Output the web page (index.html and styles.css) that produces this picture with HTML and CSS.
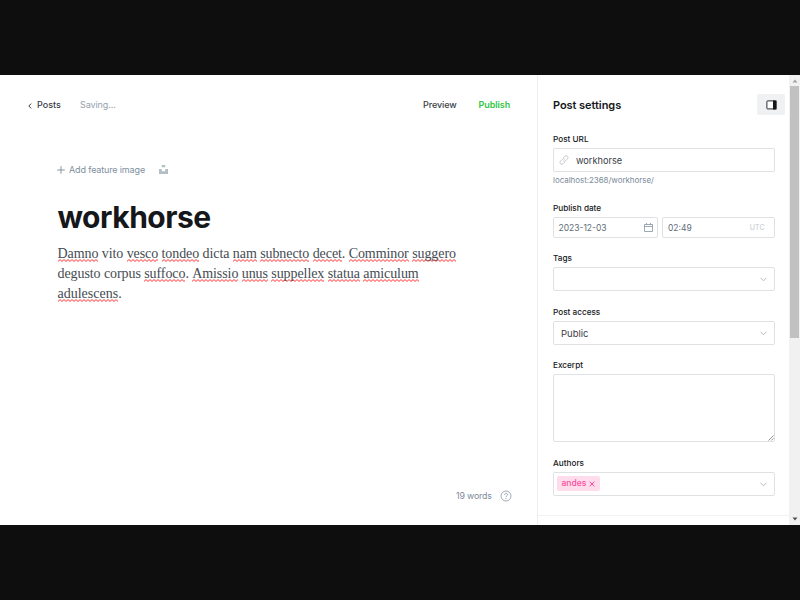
FILE: index.html
```html
<!DOCTYPE html>
<html lang="en">
<head>
<meta charset="utf-8">
<title>workhorse</title>
<link rel="stylesheet" href="styles.css">
</head>
<body>
<div class="app">
  <main class="editor">
    <header class="topbar">
      <svg class="back" viewBox="0 0 4 6"><path d="M3.2.6.8 3l2.4 2.4" fill="none" stroke="#394047"/></svg>
      <span class="posts">Posts</span>
      <span class="saving">Saving...</span>
      <span class="preview">Preview</span>
      <span class="publish">Publish</span>
    </header>
    <div class="feature">
      <svg class="plus" viewBox="0 0 8 8"><path d="M4 .2v7.6M.2 4h7.6" stroke="#7c8b9a" stroke-width=".9"/></svg>
      <span class="add">Add feature image</span>
      <svg class="unsplash" viewBox="0 0 9 9"><path d="M2.800 0h3.400v2.300H2.800zM0 4h2.800v2.300h3.400V4H9v5H0z" fill="#b4bec5"/></svg>
    </div>
    <h1>workhorse</h1>
    <div class="prose">
      <p class="l1"><u>Damno</u> vito <u>vesco</u> <u>tondeo</u> dicta <u>nam</u> <u>subnecto</u> <u>decet</u>. <u>Comminor</u> <u>suggero</u></p>
      <p class="l2">degusto corpus <u>suffoco</u>. <u>Amissio</u> <u>unus</u> <u>suppellex</u> <u>statua</u> <u>amiculum</u></p>
      <p class="l3"><u>adulescens</u>.</p>
    </div>
    <footer class="status">
      <span class="words">19 words</span>
      <svg class="help" viewBox="0 0 12 12" fill="none" stroke="#8796a5" stroke-width=".8"><circle cx="6" cy="6" r="5"/><path d="M4.500 4.800c0-2 3-2 3-.1C7.500 5.800 6 5.700 6 7.100M6 8.100v.9"/></svg>
    </footer>
  </main>
  <aside class="settings">
    <div class="head">
      <h2>Post settings</h2>
      <div class="toggle"><svg viewBox="0 0 11 10"><rect x=".9" y=".9" width="9" height="8" rx=".6" fill="#fff" stroke="#15171a" stroke-width=".9"/><path d="M7 .5h3.500v9H7z" fill="#15171a"/></svg></div>
    </div>
    <div class="group url">
      <label>Post URL</label>
      <div class="field">
        <svg class="link" viewBox="0 0 10 10" fill="none" stroke="#b8c0c7" stroke-width=".9"><path d="M4.200 3.100 6 1.300a1.500 1.500 0 0 1 2.500 2.500L6.600 5.700a1.500 1.500 0 0 1-2.300 0M5.800 6.900 4 8.700a1.500 1.500 0 0 1-2.500-2.500l1.900-1.900a1.500 1.500 0 0 1 2.300 0"/></svg>
        <span class="val">workhorse</span>
      </div>
      <div class="hint">localhost:2368/workhorse/</div>
    </div>
    <div class="group date">
      <label>Publish date</label>
      <div class="pair">
        <div class="field day"><span class="num">2023-12-03</span>
          <svg class="cal" viewBox="0 0 9 9" fill="none" stroke="#8494a3" stroke-width=".8"><path d="M.5 1.500h8v7h-8zM.5 3.500h8M2.500 0v2M6.500 0v2"/></svg></div>
        <div class="field time"><span class="num">02:49</span><span class="utc">UTC</span></div>
      </div>
    </div>
    <div class="group tags">
      <label>Tags</label>
      <div class="field select"><svg class="chev" viewBox="0 0 7 5"><path d="m.5.800 3 3 3-3" fill="none" stroke="#a9b3bb" stroke-width=".9"/></svg></div>
    </div>
    <div class="group access">
      <label>Post access</label>
      <div class="field select"><span class="public">Public</span><svg class="chev" viewBox="0 0 7 5"><path d="m.5.800 3 3 3-3" fill="none" stroke="#a9b3bb" stroke-width=".9"/></svg></div>
    </div>
    <div class="group excerpt">
      <label>Excerpt</label>
      <div class="field area"><svg class="grip" viewBox="0 0 6 6"><path d="M.5 5.500l5-5M3.300 5.500l2.200-2.200" stroke="#777" stroke-width=".8"/></svg></div>
    </div>
    <div class="group authors">
      <label>Authors</label>
      <div class="field select"><span class="chip"><span class="name">andes</span><svg viewBox="0 0 6 6"><path d="m.6.600 4.800 4.800m0-4.800L.6 5.400" stroke="#fb4d9d"/></svg></span><svg class="chev" viewBox="0 0 7 5"><path d="m.5.800 3 3 3-3" fill="none" stroke="#a9b3bb" stroke-width=".9"/></svg></div>
    </div>
    <div class="rule"></div>
  </aside>
  <div class="scroll">
    <svg class="up" viewBox="0 0 6 4"><path d="M3 .5 5.500 3.500h-5z" fill="#a3a3a3"/></svg>
    <div class="thumb"></div>
    <svg class="down" viewBox="0 0 6 4"><path d="M3 3.500.5.500h5z" fill="#505050"/></svg>
  </div>
</div>
</body>
</html>
```
FILE: styles.css
```css
* { box-sizing: border-box; }
body {
  margin: 0;
  height: 600px;
  padding: 75px 0;
  overflow: hidden;
  background: #0e0e0e;
  font-family: Inter, "Liberation Sans", sans-serif;
  color: #15171a;
}
svg { display: block; flex: none; }
.app { display: flex; height: 450px; background: #fff; }
.editor { width: 538px; border-right: 1px solid #ebeef0; display: flex; flex-direction: column; }
.topbar {
  display: flex;
  align-items: center;
  height: 14px;
  margin-top: 23px;
  padding: 0 27px;
  font-size: 9px;
  font-weight: 500;
  line-height: 14px;
  color: #394047;
}
.back { width: 4px; height: 6px; margin: 1px 5px 0 1px; }
.posts { width: 43px; }
.saving { color: #95a1ad; font-weight: 400; font-size: 9px; letter-spacing: -.08px; }
.preview { margin-left: auto; width: 55.500px; letter-spacing: -.1px; }
.publish { color: #30c543; font-weight: 600; width: 31.500px; letter-spacing: -.06px; }
.feature {
  display: flex;
  align-items: center;
  height: 14px;
  margin: 51px 0 0 57px;
  font-size: 9px;
  letter-spacing: -.14px;
  line-height: 14px;
  color: #8090a0;
}
.plus { width: 8px; height: 8px; margin-right: 4px; }
.add { width: 90px; }
.unsplash { width: 9px; height: 9px; margin-top: -1px; }
h1 {
  margin: 21px 0 0 57.500px;
  font-size: 30px;
  line-height: 38px;
  font-weight: 700;
  letter-spacing: -.48px;
}
.prose { margin: 8px 0 0 57.500px; font-family: "Liberation Serif", serif; font-size: 14px; line-height: 20px; color: #454b52; }
.prose p { margin: 0; white-space: nowrap; letter-spacing: -.08px; }
.prose .l3 { letter-spacing: 0; }
.prose u {
  display: inline-block;
  height: 20px;
  text-decoration: none;
  background: url("data:image/svg+xml,%3Csvg xmlns='http://www.w3.org/2000/svg' width='4' height='3'%3E%3Cpath d='M-1 1.500 0 2.500 2 .5 4 2.500 5 1.500' fill='none' stroke='%23ff2828' stroke-width='1'/%3E%3C/svg%3E") 0 15px repeat-x;
}
.status { display: flex; align-items: center; margin: auto 25px 22px auto; font-size: 8.800px; letter-spacing: -.15px; line-height: 14px; color: #7c8b9a; }
.words { width: 44px; }
.help { width: 12px; height: 12px; }
.settings { width: 251px; padding: 19px 4px 0 15px; display: flex; flex-direction: column; }
.head { display: flex; height: 21px; align-items: center; justify-content: space-between; }
h2 { margin: 0; font-size: 11px; font-weight: 600; line-height: 20px; letter-spacing: -.06px; }
.toggle { width: 28px; height: 21px; border-radius: 2px; background: #eff1f3; display: flex; align-items: center; justify-content: center; }
.toggle svg { width: 11px; height: 10px; }
.group { width: 221.500px; }
label { display: block; font-size: 8.200px; font-weight: 500; line-height: 12px; }
.field { display: flex; align-items: center; border: 1px solid #dfe2e5; border-radius: 2px; height: 24px; }
.url { margin-top: 18px; height: 69px; }
.url .field { margin-top: 3px; }
.link { width: 10px; height: 10px; margin: 0 7px 0 5px; }
.val { font-size: 9.200px; color: #394047; }
.hint { margin-top: 2px; font-size: 8px; line-height: 12px; letter-spacing: -.05px; color: #7c8b9a; }
.date { height: 50px; }
.pair { display: flex; gap: 4px; margin-top: 3px; }
.pair .field { height: 21px; }
.day { width: 105px; padding: 0 4.500px; justify-content: space-between; }
.time { width: 112.500px; padding: 0 9px 0 5px; justify-content: space-between; }
.num { font-size: 8.500px; color: #626d79; }
.cal { width: 9px; height: 9px; }
.utc { font-size: 7px; color: #c0c8cf; }
.tags { height: 54px; }
.access { height: 53px; }
.select { margin-top: 3px; padding: 0 7px; }
.chev { width: 7px; height: 5px; margin-left: auto; }
.public { font-size: 9.500px; color: #394047; }
.excerpt { height: 98px; }
.area { height: 68px; margin-top: 3px; align-items: flex-end; justify-content: flex-end; }
.grip { width: 6px; height: 6px; }
.authors { height: 58px; }
.authors .select { padding-left: 3px; }
.chip { display: flex; align-items: center; gap: 3px; height: 15px; width: 43px; padding-left: 4.500px; margin-bottom: 1px; border-radius: 2px; background: #ffdcec; color: #fb4d9d; font-size: 8.500px; font-weight: 500; }
.name { margin-top: -1px; }
.chip svg { width: 6px; height: 6px; }
.rule { height: 1px; margin: 0 -4px 0 -15px; background: #f0f2f4; }
.scroll { width: 11px; background: #f1f1f1; display: flex; flex-direction: column; align-items: center; }
.up, .down { width: 6px; height: 4px; }
.up { margin-top: 4px; }
.thumb { width: 9px; height: 252px; margin-top: 3px; background: #c1c1c1; }
.down { margin: auto 0 4px; }
```
